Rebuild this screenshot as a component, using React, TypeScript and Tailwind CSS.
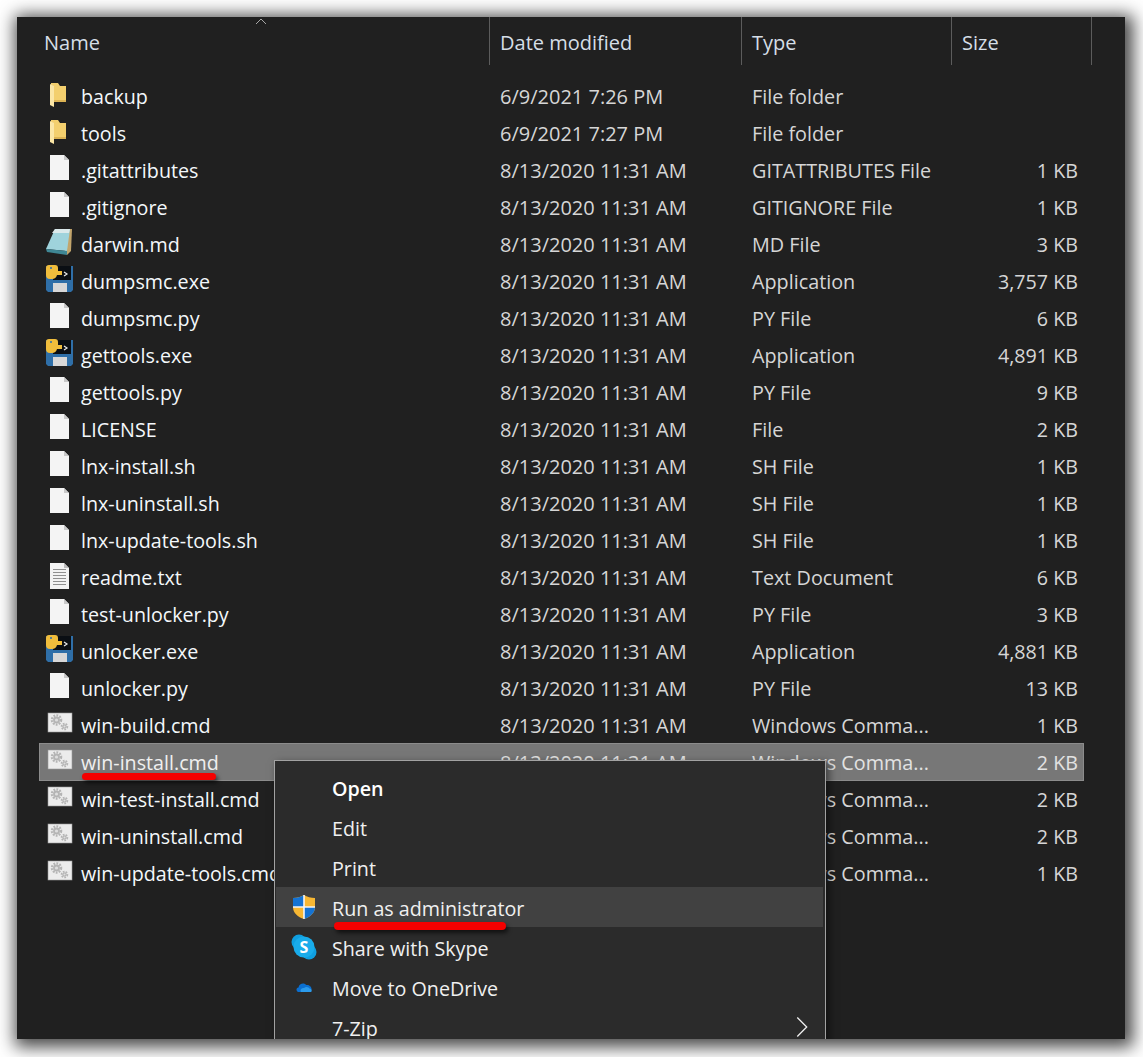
import type { ReactNode } from "react";

type IconKind = "folder" | "file" | "notes" | "python" | "text" | "cmd";

interface FileRow {
    name: string;
    date: string;
    type: string;
    size: string;
    icon: IconKind;
}

const OLD = "8/13/2020 11:31 AM";
const CMD = "Windows Comma...";

const files: FileRow[] = [
    { name: "backup", date: "6/9/2021 7:26 PM", type: "File folder", size: "", icon: "folder" },
    { name: "tools", date: "6/9/2021 7:27 PM", type: "File folder", size: "", icon: "folder" },
    { name: ".gitattributes", date: OLD, type: "GITATTRIBUTES File", size: "1 KB", icon: "file" },
    { name: ".gitignore", date: OLD, type: "GITIGNORE File", size: "1 KB", icon: "file" },
    { name: "darwin.md", date: OLD, type: "MD File", size: "3 KB", icon: "notes" },
    { name: "dumpsmc.exe", date: OLD, type: "Application", size: "3,757 KB", icon: "python" },
    { name: "dumpsmc.py", date: OLD, type: "PY File", size: "6 KB", icon: "file" },
    { name: "gettools.exe", date: OLD, type: "Application", size: "4,891 KB", icon: "python" },
    { name: "gettools.py", date: OLD, type: "PY File", size: "9 KB", icon: "file" },
    { name: "LICENSE", date: OLD, type: "File", size: "2 KB", icon: "file" },
    { name: "lnx-install.sh", date: OLD, type: "SH File", size: "1 KB", icon: "file" },
    { name: "lnx-uninstall.sh", date: OLD, type: "SH File", size: "1 KB", icon: "file" },
    { name: "lnx-update-tools.sh", date: OLD, type: "SH File", size: "1 KB", icon: "file" },
    { name: "readme.txt", date: OLD, type: "Text Document", size: "6 KB", icon: "text" },
    { name: "test-unlocker.py", date: OLD, type: "PY File", size: "3 KB", icon: "file" },
    { name: "unlocker.exe", date: OLD, type: "Application", size: "4,881 KB", icon: "python" },
    { name: "unlocker.py", date: OLD, type: "PY File", size: "13 KB", icon: "file" },
    { name: "win-build.cmd", date: OLD, type: CMD, size: "1 KB", icon: "cmd" },
    { name: "win-install.cmd", date: OLD, type: CMD, size: "2 KB", icon: "cmd" },
    { name: "win-test-install.cmd", date: OLD, type: CMD, size: "2 KB", icon: "cmd" },
    { name: "win-uninstall.cmd", date: OLD, type: CMD, size: "2 KB", icon: "cmd" },
    { name: "win-update-tools.cmd", date: OLD, type: CMD, size: "1 KB", icon: "cmd" },
];

const Gear = ({ cx, cy, r }: { cx: number; cy: number; r: number }) => (
    <g>
        <circle cx={cx} cy={cy} r={r} fill="none" stroke="#b4b4b4" strokeWidth={r * 0.5} strokeDasharray="1.8 1.2" />
        <circle cx={cx} cy={cy} r={r * 0.75} fill="#b4b4b4" />
        <circle cx={cx} cy={cy} r={r * 0.35} fill="#dedede" />
    </g>
);

const FileIcon = ({ kind }: { kind: IconKind }) => {
    let art: ReactNode = null;
    if (kind === "folder") {
        art = (
            <g>
                <path d="M7 5 H14 L16 8 H22 V24 H10 V9 L7 7 Z" fill="#f3cf6e" />
                <path d="M6 6 L10 8 V29 L6 27 Z" fill="#fbe6a6" />
                <path d="M10 22 H22 V24 H10 Z" fill="#dcb354" />
            </g>
        );
    } else if (kind === "file") {
        art = (
            <g>
                <path d="M6 3 H20 L25 8 V28 H6 Z" fill="#f4f4f4" />
                <path d="M20 3 L25 8 H20 Z" fill="#c9c9c9" />
            </g>
        );
    } else if (kind === "text") {
        art = (
            <g>
                <path d="M6 4 H20 L25 9 V30 H6 Z" fill="#f2f2f2" />
                <path d="M20 4 L25 9 H20 Z" fill="#bdbdbd" />
                <path d="M9 10.5 H22 M9 13.5 H22 M9 16.5 H22 M9 19.5 H22 M9 22.5 H22 M9 25.5 H22" stroke="#8f8f8f" strokeWidth="1" />
            </g>
        );
    } else if (kind === "notes") {
        art = (
            <g>
                <path d="M11 3 L28 3 L27 25 L23 29 Z" fill="#c2a56c" />
                <path d="M11 3 H26 L23 25 L2 23 Z" fill="#9fd3dc" />
                <path d="M11 3 H26 L25 7 L8 7 Z" fill="#dbe9eb" />
                <path d="M2 23 L23 25 L23 29 L3 26 Z" fill="#3f8795" />
            </g>
        );
    } else if (kind === "python") {
        art = (
            <g>
                <path d="M2 3 H29 V27 L27 29 H4 L2 27 Z" fill="#2f6fa8" />
                <rect x="9" y="3" width="18" height="14" fill="#0b0f14" />
                <path d="M20 9 L23 11 L20 13" fill="none" stroke="#e8e8e8" strokeWidth="1.2" />
                <rect x="9" y="20" width="14" height="9" fill="#d8d8d8" />
                <path d="M5 2 H11 Q14 2 14 5 V8 H18 V12 H13 Q12 16 8 16 H6 Q2 16 2 12 V5 Q2 2 5 2 Z" fill="#f0bd3c" />
                <circle cx="7" cy="5" r="1" fill="#2f6fa8" />
            </g>
        );
    } else if (kind === "cmd") {
        art = (
            <g>
                <rect x="4" y="6" width="24" height="19" fill="#ececec" stroke="#9a9a9a" strokeWidth="0.6" />
                <Gear cx={12.5} cy={13} r={4.6} />
                <Gear cx={20.5} cy={19.5} r={3} />
            </g>
        );
    }
    return (
        <svg viewBox="0 0 32 32" className="w-8 h-8 shrink-0 mb-[6px]">
            {art}
        </svg>
    );
};

const MenuItem = ({ label, bold, active, icon, arrow }: { label: string; bold?: boolean; active?: boolean; icon?: ReactNode; arrow?: boolean }) => (
    <div className={`relative flex h-10 items-center ml-px mr-[2px] ${active ? "bg-[#414141]" : ""}`}>
        <div className="w-[56px] h-10 shrink-0 flex items-center justify-center">{icon}</div>
        <span className={`pt-1 text-[19.7px] ${bold ? "font-semibold text-white" : "text-[#f0f0f0]"}`}>{label}</span>
        {arrow && (
            <svg viewBox="0 0 14 24" className="absolute right-[15px] top-[9px] w-3 h-[22px]">
                <path d="M1.5 1 L12.5 12 L1.5 23" fill="none" stroke="#f0f0f0" strokeWidth="1.5" />
            </svg>
        )}
    </div>
);

const App = () => {
    return (
        <div className="w-[1143px] h-[1057px] overflow-hidden bg-white pl-[17px] pt-[17px] font-['Open_Sans',sans-serif] text-[20px]">
            <div className="relative w-[1108px] h-[1022px] overflow-hidden bg-[#202020] shadow-[3px_3px_16px_5px_rgba(0,0,0,0.72)]">
                {/* Column headers */}
                <div className="flex h-12 text-[#d5dee6]">
                    <div className="w-[473px] border-r border-[#5c5c5c] pl-[27px] pt-[11px]">Name</div>
                    <div className="w-[252px] border-r border-[#5c5c5c] pl-[10px] pt-[11px]">Date modified</div>
                    <div className="w-[210px] border-r border-[#5c5c5c] pl-[10px] pt-[11px]">Type</div>
                    <div className="w-[140px] border-r border-[#5c5c5c] pl-[10px] pt-[11px]">Size</div>
                </div>
                <svg viewBox="0 0 12 7" className="absolute left-[238px] top-[1px] w-3 h-[7px]">
                    <path d="M1 6 L6 1 L11 6" fill="none" stroke="#a8a8a8" strokeWidth="1" />
                </svg>

                {/* File rows */}
                <div className="mt-[13px] ml-[22px] w-[1045px]">
                    {files.map((file) => {
                        const selected = file.name === "win-install.cmd";
                        return (
                            <div
                                key={file.name}
                                className={`flex items-center pl-[5px] ${selected ? "-mt-px h-[38px] pt-px bg-[#777777] outline outline-1 -outline-offset-1 outline-[#8c8c8c] text-[#e2e2e2]" : "h-[37px] text-[#d6d6d6]"}`}
                            >
                                <FileIcon kind={file.icon} />
                                <div className={`w-[424px] shrink-0 pl-[5px] whitespace-nowrap text-[19.7px] ${selected ? "text-[#efefef]" : "text-[#f4f8fb]"}`}>{file.name}</div>
                                <div className="w-[252px] shrink-0">{file.date}</div>
                                <div className="w-[210px] shrink-0 text-[19.8px]">{file.type}</div>
                                <div className="w-[116px] shrink-0 text-right text-[19.7px]">{file.size}</div>
                            </div>
                        );
                    })}
                </div>

                {/* Red annotation under the file name */}
                <div className="absolute left-[65px] top-[756px] w-[134px] h-[7px] rounded-full bg-[#f50000] shadow-[2px_3px_4px_rgba(0,0,0,0.6)]" />

                {/* Context menu */}
                <div className="absolute left-[257px] top-[743px] w-[552px] h-[300px] border border-[#a2a2a2] bg-[#2b2b2b] pt-[6px] shadow-[3px_3px_8px_rgba(0,0,0,0.5)]">
                    <MenuItem label="Open" bold />
                    <MenuItem label="Edit" />
                    <MenuItem label="Print" />
                    <MenuItem
                        label="Run as administrator"
                        active
                        icon={
                            <svg viewBox="0 0 24 24" className="w-6 h-6">
                                <path d="M12 0 C9 2 5 3 1 3 V12 C1 18 6 22 12 24 C18 22 23 18 23 12 V3 C19 3 15 2 12 0 Z" fill="#f7b733" />
                                <path d="M12 0 C9 2 5 3 1 3 V12 H12 Z" fill="#1473d4" />
                                <path d="M12 12 H23 V12 C23 18 18 22 12 24 Z" fill="#1473d4" />
                                <path d="M12 0 V24 M1 12 H23" stroke="#f4f4f4" strokeWidth="1.6" />
                            </svg>
                        }
                    />
                    <MenuItem
                        label="Share with Skype"
                        icon={
                            <svg viewBox="0 0 26 26" className="w-[26px] h-[26px]">
                                <circle cx="8" cy="8" r="7.5" fill="#0f9fe0" />
                                <circle cx="18" cy="18" r="7.5" fill="#0f9fe0" />
                                <circle cx="13" cy="13" r="10.5" fill="#19aceb" />
                                <text x="13" y="18.5" textAnchor="middle" fontFamily="'Open Sans', sans-serif" fontSize="16" fontWeight="700" fill="#ffffff">S</text>
                            </svg>
                        }
                    />
                    <MenuItem
                        label="Move to OneDrive"
                        icon={
                            <svg viewBox="0 0 16 10" className="w-4 h-[10px]">
                                <path d="M3 10 C0 10 -0.5 6 2.5 5.5 C3 1.5 8 0 10.5 3 C13 2.5 16 5 15.5 7.5 L14 10 Z" fill="#0b6fd0" />
                                <path d="M5 10 C3.5 7.5 6 5.5 8 6 C10 4 13 5 13.5 6.5 C15.5 6.5 16.5 9 15 10 Z" fill="#2b9bec" />
                            </svg>
                        }
                    />
                    <MenuItem label="7-Zip" arrow />
                </div>

                {/* Red annotation under the menu item */}
                <div className="absolute left-[317px] top-[905px] w-[172px] h-2 rounded-full bg-[#f50000] shadow-[2px_3px_4px_rgba(0,0,0,0.6)]" />
            </div>
        </div>
    );
};

export default App;
